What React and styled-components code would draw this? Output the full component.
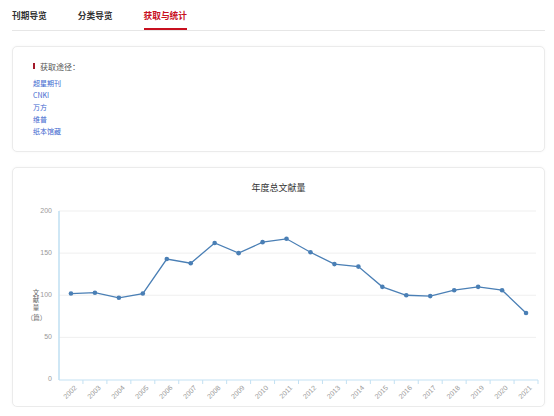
import { createGlobalStyle, styled } from 'styled-components';

const GlobalStyle = createGlobalStyle`
  html, body {
    margin: 0;
    padding: 0;
    background: #fff;
  }
  body {
    font-family: "Noto Sans CJK SC", "Noto Sans", sans-serif;
  }
`;

const Page = styled.div`
  padding: 0 9px 0 12px;
`;

const TabBar = styled.div`
  display: flex;
  gap: 31px;
  height: 31px;
  box-sizing: border-box;
  border-bottom: 1px solid #e6e6e6;
`;

const Tab = styled.div`
  box-sizing: border-box;
  height: 30px;
  padding-top: 11px;
  font-size: 8.7px;
  line-height: 10px;
  font-weight: 700;
  color: ${(p) => (p.$active ? '#c8101f' : '#333')};
  border-bottom: 2px solid ${(p) => (p.$active ? '#c8101f' : 'transparent')};
  white-space: nowrap;
`;

const Card = styled.div`
  box-sizing: border-box;
  margin-top: 15px;
  height: ${(p) => p.$h}px;
  border: 1px solid #ebebeb;
  border-radius: 5px;
  box-shadow: 0 0 3px rgba(0, 0, 0, 0.04);
  background: #fff;
`;

const SourceBox = styled.div`
  padding: 13px 0 0 20px;
`;

const Heading = styled.div`
  display: flex;
  align-items: center;
  gap: 5px;
  height: 12px;
  font-size: 8px;
  color: #555;
  margin-bottom: 5px;

  &::before {
    content: '';
    width: 2px;
    height: 6px;
    background: #a3192a;
  }
`;

const LinkList = styled.ul`
  list-style: none;
  margin: 0;
  padding: 0;
`;

const LinkItem = styled.li`
  font-size: 7px;
  line-height: 12px;
  color: #3d68cf;
`;

const ChartTitle = styled.div`
  padding-top: 14px;
  font-size: 9px;
  line-height: 12px;
  text-align: center;
  color: #333;
`;

const ChartSvg = styled.svg`
  display: block;
  width: 531px;
  height: 212px;
`;

const years = [2002, 2003, 2004, 2005, 2006, 2007, 2008, 2009, 2010, 2011, 2012, 2013, 2014, 2015, 2016, 2017, 2018, 2019, 2020, 2021];
const values = [102, 103, 97, 102, 143, 138, 162, 150, 163, 167, 151, 137, 134, 110, 100, 99, 106, 110, 106, 79];

const X0 = 59;
const X1 = 538;
const Y0 = 379.5;
const Y200 = 211;
const step = (X1 - X0) / years.length;
const px = (i) => X0 + step * (i + 0.5);
const py = (v) => Y0 - ((Y0 - Y200) * v) / 200;

function YearChart() {
  const points = values.map((v, i) => `${px(i)},${py(v)}`).join(' ');
  return (
    <ChartSvg viewBox="13 194 531 212">
      {[50, 100, 150, 200].map((v) => (
        <line key={v} x1={X0} x2={536} y1={py(v)} y2={py(v)} stroke="#efefef" strokeWidth="1" />
      ))}
      {[0, 50, 100, 150, 200].map((v) => (
        <text key={v} x={52} y={py(v)} fontSize="7" fill="#999" textAnchor="end" dominantBaseline="middle" fontFamily="Liberation Sans, sans-serif">
          {v}
        </text>
      ))}
      <text
        x={36}
        y={289}
        fontSize="6.5"
        fill="#666"
        fontFamily="Noto Sans CJK SC, sans-serif"
        style={{ writingMode: 'vertical-rl', letterSpacing: '1.2px' }}
      >
        文献量
      </text>
      <text x={36.5} y={318.5} fontSize="6.5" fill="#666" textAnchor="middle" dominantBaseline="middle" fontFamily="Noto Sans CJK SC, sans-serif">
        （篇）
      </text>
      <line x1={X0} x2={X0} y1={Y200} y2={380} stroke="#c3e1f3" strokeWidth="1.6" />
      <line x1={X0} x2={X1} y1={380} y2={380} stroke="#c3e1f3" strokeWidth="1.2" />
      {years.map((y, i) => (
        <line key={`t${y}`} x1={X0 + step * (i + 1)} x2={X0 + step * (i + 1)} y1={380} y2={384} stroke="#c3e1f3" strokeWidth="1" />
      ))}
      {years.map((y, i) => (
        <g key={y} transform={`translate(${px(i) + 5} 387) rotate(-45)`}>
          <text x={0} y={0} fontSize="7" fill="#999" textAnchor="end" dominantBaseline="middle" fontFamily="Liberation Sans, sans-serif">
            {y}
          </text>
        </g>
      ))}
      <polyline points={points} fill="none" stroke="#4a7fb5" strokeWidth="1.3" />
      {values.map((v, i) => (
        <circle key={i} cx={px(i)} cy={py(v)} r="2.3" fill="#4a7fb5" />
      ))}
    </ChartSvg>
  );
}

export default function App() {
  const sources = ['超星期刊', 'CNKI', '万方', '维普', '纸本馆藏'];
  return (
    <Page>
      <GlobalStyle />
      <TabBar>
        <Tab>刊期导览</Tab>
        <Tab>分类导览</Tab>
        <Tab $active>获取与统计</Tab>
      </TabBar>
      <Card $h={106}>
        <SourceBox>
          <Heading>获取途径：</Heading>
          <LinkList>
            {sources.map((s) => (
              <LinkItem key={s}>{s}</LinkItem>
            ))}
          </LinkList>
        </SourceBox>
      </Card>
      <Card $h={240}>
        <ChartTitle>年度总文献量</ChartTitle>
        <YearChart />
      </Card>
    </Page>
  );
}
